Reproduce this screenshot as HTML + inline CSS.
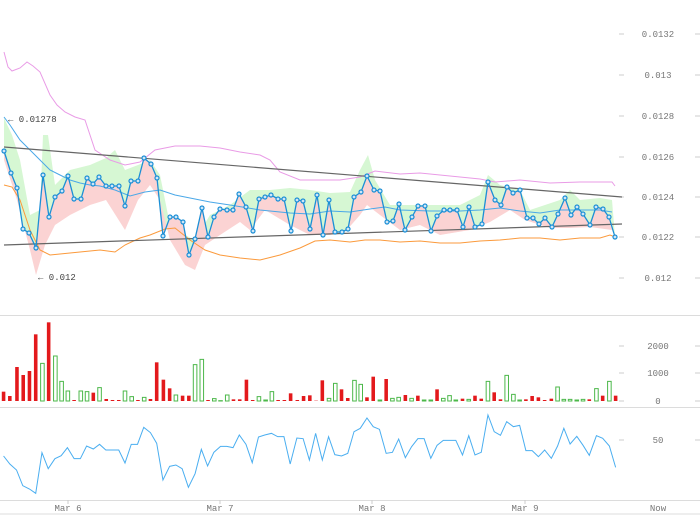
<!DOCTYPE html>
<html><head><meta charset="utf-8"><style>
html,body{margin:0;padding:0;background:#fff;width:700px;height:515px;overflow:hidden}
svg{display:block}
text{font-family:"Liberation Mono",monospace;font-size:9px;fill:#777}
.ns{vector-effect:non-scaling-stroke}
</style></head><body>
<svg width="700" height="515" viewBox="0 0 700 515">
<g stroke="#dcdcdc" stroke-width="1">
<line x1="0" y1="315.5" x2="700" y2="315.5"/>
<line x1="0" y1="407.5" x2="700" y2="407.5"/>
<line x1="0" y1="500.5" x2="700" y2="500.5"/>
<line x1="0" y1="514" x2="700" y2="514"/>
</g>
<g stroke="#ccc">
<line x1="619" y1="34" x2="624" y2="34"/><line x1="695" y1="34" x2="700" y2="34"/>
<line x1="619" y1="75" x2="624" y2="75"/><line x1="695" y1="75" x2="700" y2="75"/>
<line x1="619" y1="116" x2="624" y2="116"/><line x1="695" y1="116" x2="700" y2="116"/>
<line x1="619" y1="157" x2="624" y2="157"/><line x1="695" y1="157" x2="700" y2="157"/>
<line x1="619" y1="197" x2="624" y2="197"/><line x1="695" y1="197" x2="700" y2="197"/>
<line x1="619" y1="237" x2="624" y2="237"/><line x1="695" y1="237" x2="700" y2="237"/>
<line x1="619" y1="278" x2="624" y2="278"/><line x1="695" y1="278" x2="700" y2="278"/>
<line x1="619" y1="346" x2="624" y2="346"/><line x1="695" y1="346" x2="700" y2="346"/>
<line x1="619" y1="373" x2="624" y2="373"/><line x1="695" y1="373" x2="700" y2="373"/>
<line x1="619" y1="401" x2="624" y2="401"/><line x1="695" y1="401" x2="700" y2="401"/>
<line x1="619" y1="440" x2="624" y2="440"/><line x1="695" y1="440" x2="700" y2="440"/>
<line x1="68" y1="500" x2="68" y2="504"/><line x1="220" y1="500" x2="220" y2="504"/>
<line x1="372" y1="500" x2="372" y2="504"/><line x1="525" y1="500" x2="525" y2="504"/>
</g>
<g text-anchor="middle">
<text x="658" y="37">0.0132</text><text x="658" y="78">0.013</text>
<text x="658" y="119">0.0128</text><text x="658" y="160">0.0126</text>
<text x="658" y="200">0.0124</text><text x="658" y="240">0.0122</text>
<text x="658" y="281">0.012</text>
<text x="658" y="349">2000</text><text x="658" y="376">1000</text><text x="658" y="404">0</text>
<text x="658" y="443">50</text>
<text x="68" y="511">Mar 6</text><text x="220" y="511">Mar 7</text>
<text x="372" y="511">Mar 8</text><text x="525" y="511">Mar 9</text>
<text x="658" y="511">Now</text>
</g>

<polygon fill="#d6f7d3" points="4,118 12,135 20,160 30,215 40,210 43,135 48,135 55,185 70,170 90,165 106,158 115,150 125,170 138,165 150,160 160,175 170,225 185,235 195,240 210,215 230,205 250,190 270,190 290,188 310,190 330,193 350,192 360,170 368,155 375,180 390,205 410,205 430,205 460,205 480,195 488,175 500,185 520,190 530,210 560,200 570,190 580,200 600,198 612,200 615,237 609,217 603,209 596,207 590,225 583,214 577,207 571,215 565,198 558,214 552,227 545,218 539,224 533,218 527,218 520,190 513,193 507,187 501,205 495,200 488,182 482,224 475,227 469,207 463,227 457,210 450,210 444,210 437,216 431,231 425,206 418,206 412,217 405,230 399,204 393,221 387,222 380,191 374,190 367,176 361,192 354,197 348,229 342,232 335,232 329,200 323,235 317,195 310,229 303,201 297,200 291,231 284,199 278,199 271,195 265,197 259,199 253,231 246,207 239,194 233,210 227,210 220,209 214,217 208,237 202,208 195,239 189,255 183,222 176,217 170,217 163,236 157,178 151,164 144,158 138,181 131,181 125,206 119,186 112,186 106,186 99,177 93,184 87,178 81,199 74,199 68,176 62,191 55,197 49,217 43,175 36,248 29,233 23,229 17,188 11,173 4,151"/>
<polygon fill="#fbd3d3" points="4,151 11,173 17,188 23,229 29,233 36,248 43,175 49,217 55,197 62,191 68,176 74,199 81,199 87,178 93,184 99,177 106,186 112,186 119,186 125,206 131,181 138,181 144,158 151,164 157,178 163,236 170,217 176,217 183,222 189,255 195,239 202,208 208,237 214,217 220,209 227,210 233,210 239,194 246,207 253,231 259,199 265,197 271,195 278,199 284,199 291,231 297,200 303,201 310,229 317,195 323,235 329,200 335,232 342,232 348,229 354,197 361,192 367,176 374,190 380,191 387,222 393,221 399,204 405,230 412,217 418,206 425,206 431,231 437,216 444,210 450,210 457,210 463,227 469,207 475,227 482,224 488,182 495,200 501,205 507,187 513,193 520,190 527,218 533,218 539,224 545,218 552,227 558,214 565,198 571,215 577,207 583,214 590,225 596,207 603,209 609,217 615,237 612,230 590,227 570,228 550,228 525,220 510,210 490,222 470,230 440,235 420,225 400,230 380,215 367,205 360,215 345,232 330,235 310,235 290,225 265,210 250,230 240,222 220,235 205,245 195,270 185,265 170,240 160,200 150,185 138,200 125,230 106,200 90,205 70,215 55,225 45,245 36,275 30,250 17,200 4,160"/>

<polyline fill="none" stroke="#e99be6" stroke-width="1" points="4,52 8,67 12,71 20,68 27,62 33,66 40,72 50,95 57,105 65,112 75,117 85,120 95,150 110,160 125,165 140,162 155,150 175,146 200,146 220,148 240,152 260,155 270,160 280,172 300,180 320,180 340,180 360,177 375,171 400,174 420,173 450,176 480,179 495,182 520,180 550,183 580,182 600,182 612,182 615,186"/>
<polyline fill="none" stroke="#4aa8e8" stroke-width="1" points="4,117 10,125 20,140 30,150 40,160 50,170 60,175 70,180 80,183 90,185 100,186 115,190 130,196 145,192 160,190 175,195 190,198 210,202 230,205 260,210 290,213 310,214 330,211 350,212 370,209 385,207 400,210 430,211 460,211 480,210 500,208 520,211 540,213 560,210 580,210 600,210 612,212"/>
<polyline fill="none" stroke="#fb9a3c" stroke-width="1" points="4,185 12,187 20,200 30,230 40,250 50,255 60,254 80,252 100,250 115,252 125,245 140,238 150,235 165,229 175,228 190,240 205,250 220,255 240,258 260,260 280,255 300,248 315,241 330,240 350,242 365,240 380,240 400,242 420,241 440,243 460,243 480,241 500,240 520,238 540,238 560,240 580,238 600,238 610,235 615,237"/>
<line x1="4" y1="147" x2="622" y2="197" stroke="#666" stroke-width="1.2"/>
<line x1="4" y1="245" x2="622" y2="224" stroke="#666" stroke-width="1.2"/>

<polyline fill="none" stroke="#1b8fd6" stroke-width="1.3" points="4,151 11,173 17,188 23,229 29,233 36,248 43,175 49,217 55,197 62,191 68,176 74,199 81,199 87,178 93,184 99,177 106,186 112,186 119,186 125,206 131,181 138,181 144,158 151,164 157,178 163,236 170,217 176,217 183,222 189,255 195,239 202,208 208,237 214,217 220,209 227,210 233,210 239,194 246,207 253,231 259,199 265,197 271,195 278,199 284,199 291,231 297,200 303,201 310,229 317,195 323,235 329,200 335,232 342,232 348,229 354,197 361,192 367,176 374,190 380,191 387,222 393,221 399,204 405,230 412,217 418,206 425,206 431,231 437,216 444,210 450,210 457,210 463,227 469,207 475,227 482,224 488,182 495,200 501,205 507,187 513,193 520,190 527,218 533,218 539,224 545,218 552,227 558,214 565,198 571,215 577,207 583,214 590,225 596,207 603,209 609,217 615,237"/>
<g fill="#cfe6f7" stroke="#1b8fd6" stroke-width="1.2">
<circle cx="4" cy="151" r="2"/><circle cx="11" cy="173" r="2"/><circle cx="17" cy="188" r="2"/><circle cx="23" cy="229" r="2"/><circle cx="29" cy="233" r="2"/><circle cx="36" cy="248" r="2"/><circle cx="43" cy="175" r="2"/><circle cx="49" cy="217" r="2"/><circle cx="55" cy="197" r="2"/><circle cx="62" cy="191" r="2"/><circle cx="68" cy="176" r="2"/><circle cx="74" cy="199" r="2"/><circle cx="81" cy="199" r="2"/><circle cx="87" cy="178" r="2"/><circle cx="93" cy="184" r="2"/><circle cx="99" cy="177" r="2"/><circle cx="106" cy="186" r="2"/><circle cx="112" cy="186" r="2"/><circle cx="119" cy="186" r="2"/><circle cx="125" cy="206" r="2"/><circle cx="131" cy="181" r="2"/><circle cx="138" cy="181" r="2"/><circle cx="144" cy="158" r="2"/><circle cx="151" cy="164" r="2"/><circle cx="157" cy="178" r="2"/><circle cx="163" cy="236" r="2"/><circle cx="170" cy="217" r="2"/><circle cx="176" cy="217" r="2"/><circle cx="183" cy="222" r="2"/><circle cx="189" cy="255" r="2"/><circle cx="195" cy="239" r="2"/><circle cx="202" cy="208" r="2"/><circle cx="208" cy="237" r="2"/><circle cx="214" cy="217" r="2"/><circle cx="220" cy="209" r="2"/><circle cx="227" cy="210" r="2"/><circle cx="233" cy="210" r="2"/><circle cx="239" cy="194" r="2"/><circle cx="246" cy="207" r="2"/><circle cx="253" cy="231" r="2"/><circle cx="259" cy="199" r="2"/><circle cx="265" cy="197" r="2"/><circle cx="271" cy="195" r="2"/><circle cx="278" cy="199" r="2"/><circle cx="284" cy="199" r="2"/><circle cx="291" cy="231" r="2"/><circle cx="297" cy="200" r="2"/><circle cx="303" cy="201" r="2"/><circle cx="310" cy="229" r="2"/><circle cx="317" cy="195" r="2"/><circle cx="323" cy="235" r="2"/><circle cx="329" cy="200" r="2"/><circle cx="335" cy="232" r="2"/><circle cx="342" cy="232" r="2"/><circle cx="348" cy="229" r="2"/><circle cx="354" cy="197" r="2"/><circle cx="361" cy="192" r="2"/><circle cx="367" cy="176" r="2"/><circle cx="374" cy="190" r="2"/><circle cx="380" cy="191" r="2"/><circle cx="387" cy="222" r="2"/><circle cx="393" cy="221" r="2"/><circle cx="399" cy="204" r="2"/><circle cx="405" cy="230" r="2"/><circle cx="412" cy="217" r="2"/><circle cx="418" cy="206" r="2"/><circle cx="425" cy="206" r="2"/><circle cx="431" cy="231" r="2"/><circle cx="437" cy="216" r="2"/><circle cx="444" cy="210" r="2"/><circle cx="450" cy="210" r="2"/><circle cx="457" cy="210" r="2"/><circle cx="463" cy="227" r="2"/><circle cx="469" cy="207" r="2"/><circle cx="475" cy="227" r="2"/><circle cx="482" cy="224" r="2"/><circle cx="488" cy="182" r="2"/><circle cx="495" cy="200" r="2"/><circle cx="501" cy="205" r="2"/><circle cx="507" cy="187" r="2"/><circle cx="513" cy="193" r="2"/><circle cx="520" cy="190" r="2"/><circle cx="527" cy="218" r="2"/><circle cx="533" cy="218" r="2"/><circle cx="539" cy="224" r="2"/><circle cx="545" cy="218" r="2"/><circle cx="552" cy="227" r="2"/><circle cx="558" cy="214" r="2"/><circle cx="565" cy="198" r="2"/><circle cx="571" cy="215" r="2"/><circle cx="577" cy="207" r="2"/><circle cx="583" cy="214" r="2"/><circle cx="590" cy="225" r="2"/><circle cx="596" cy="207" r="2"/><circle cx="603" cy="209" r="2"/><circle cx="609" cy="217" r="2"/><circle cx="615" cy="237" r="2"/>
</g>
<text x="8" y="122" style="fill:#444">← 0.01278</text>
<text x="38" y="280" style="fill:#444">← 0.012</text>

<g transform="translate(0,290) scale(0.44643,0.33333)">
<g fill="#e3191c">
<rect x="4" y="305" width="8" height="28"/><rect x="18" y="318" width="8" height="15"/><rect x="34" y="231" width="8" height="102"/><rect x="48" y="255" width="8" height="78"/><rect x="62" y="243" width="8" height="90"/><rect x="76" y="133" width="8" height="200"/><rect x="105" y="97" width="8" height="236"/><rect x="162" y="330" width="8" height="3"/><rect x="205" y="308" width="8" height="25"/><rect x="234" y="327" width="8" height="6"/><rect x="248" y="330" width="8" height="3"/><rect x="262" y="330" width="8" height="3"/><rect x="305" y="330" width="8" height="3"/><rect x="333" y="327" width="8" height="6"/><rect x="347" y="217" width="8" height="116"/><rect x="362" y="269" width="8" height="64"/><rect x="376" y="295" width="8" height="38"/><rect x="405" y="317" width="8" height="16"/><rect x="419" y="317" width="8" height="16"/><rect x="462" y="330" width="8" height="3"/><rect x="519" y="328" width="8" height="5"/><rect x="533" y="328" width="8" height="5"/><rect x="548" y="269" width="8" height="64"/><rect x="562" y="330" width="8" height="3"/><rect x="619" y="330" width="8" height="3"/><rect x="633" y="330" width="8" height="3"/><rect x="647" y="310" width="8" height="23"/><rect x="662" y="330" width="8" height="3"/><rect x="676" y="318" width="8" height="15"/><rect x="690" y="316" width="8" height="17"/><rect x="704" y="332" width="8" height="1"/><rect x="718" y="271" width="8" height="62"/><rect x="761" y="298" width="8" height="35"/><rect x="775" y="324" width="8" height="9"/><rect x="818" y="322" width="8" height="11"/><rect x="832" y="260" width="8" height="73"/><rect x="861" y="267" width="8" height="66"/><rect x="904" y="315" width="8" height="18"/><rect x="932" y="317" width="8" height="16"/><rect x="975" y="298" width="8" height="35"/><rect x="1032" y="326" width="8" height="7"/><rect x="1060" y="317" width="8" height="16"/><rect x="1074" y="326" width="8" height="7"/><rect x="1103" y="307" width="8" height="26"/><rect x="1117" y="328" width="8" height="5"/><rect x="1174" y="328" width="8" height="5"/><rect x="1188" y="318" width="8" height="15"/><rect x="1202" y="322" width="8" height="11"/><rect x="1216" y="330" width="8" height="3"/><rect x="1231" y="326" width="8" height="7"/><rect x="1316" y="328" width="8" height="5"/><rect x="1346" y="317" width="8" height="16"/><rect x="1375" y="317" width="8" height="16"/>
</g>
<g fill="#fff" stroke="#4cb84a" stroke-width="1">
<rect class="ns" x="91" y="220" width="8" height="113"/><rect class="ns" x="120" y="198" width="8" height="135"/><rect class="ns" x="134" y="274" width="8" height="59"/><rect class="ns" x="148" y="303" width="8" height="30"/><rect class="ns" x="177" y="303" width="8" height="30"/><rect class="ns" x="191" y="305" width="8" height="28"/><rect class="ns" x="219" y="293" width="8" height="40"/><rect class="ns" x="276" y="303" width="8" height="30"/><rect class="ns" x="291" y="320" width="8" height="13"/><rect class="ns" x="319" y="322" width="8" height="11"/><rect class="ns" x="390" y="315" width="8" height="18"/><rect class="ns" x="433" y="224" width="8" height="109"/><rect class="ns" x="448" y="208" width="8" height="125"/><rect class="ns" x="476" y="326" width="8" height="7"/><rect class="ns" x="490" y="332" width="8" height="1"/><rect class="ns" x="505" y="315" width="8" height="18"/><rect class="ns" x="576" y="320" width="8" height="13"/><rect class="ns" x="591" y="330" width="8" height="3"/><rect class="ns" x="605" y="305" width="8" height="28"/><rect class="ns" x="733" y="325" width="8" height="8"/><rect class="ns" x="747" y="280" width="8" height="53"/><rect class="ns" x="790" y="271" width="8" height="62"/><rect class="ns" x="804" y="283" width="8" height="50"/><rect class="ns" x="847" y="330" width="8" height="3"/><rect class="ns" x="875" y="325" width="8" height="8"/><rect class="ns" x="889" y="322" width="8" height="11"/><rect class="ns" x="918" y="325" width="8" height="8"/><rect class="ns" x="946" y="330" width="8" height="3"/><rect class="ns" x="961" y="330" width="8" height="3"/><rect class="ns" x="989" y="325" width="8" height="8"/><rect class="ns" x="1003" y="317" width="8" height="16"/><rect class="ns" x="1017" y="330" width="8" height="3"/><rect class="ns" x="1046" y="328" width="8" height="5"/><rect class="ns" x="1089" y="274" width="8" height="59"/><rect class="ns" x="1131" y="256" width="8" height="77"/><rect class="ns" x="1146" y="313" width="8" height="20"/><rect class="ns" x="1160" y="330" width="8" height="3"/><rect class="ns" x="1245" y="291" width="8" height="42"/><rect class="ns" x="1259" y="328" width="8" height="5"/><rect class="ns" x="1273" y="328" width="8" height="5"/><rect class="ns" x="1288" y="330" width="8" height="3"/><rect class="ns" x="1302" y="328" width="8" height="5"/><rect class="ns" x="1332" y="296" width="8" height="37"/><rect class="ns" x="1361" y="274" width="8" height="59"/>
</g>
<polyline class="ns" fill="none" stroke="#4aaef0" stroke-width="1" points="8,498 22,522 37,540 51,587 66,597 80,610 94,488 108,536 123,506 137,497 151,473 166,506 180,506 194,468 209,477 223,463 237,480 251,480 266,480 280,519 294,463 308,463 322,412 337,428 351,460 365,570 380,529 394,525 408,536 422,592 437,551 451,478 465,528 479,487 494,469 508,469 522,473 536,435 551,463 565,518 579,441 593,435 608,430 622,440 636,440 650,522 665,444 679,446 693,510 707,430 722,510 736,440 750,494 765,498 779,490 793,425 807,415 822,384 836,410 850,418 865,490 879,487 893,447 908,503 922,470 936,446 950,446 965,505 979,466 993,451 1007,451 1021,451 1036,495 1050,437 1064,495 1078,487 1093,375 1107,425 1121,436 1135,395 1150,410 1164,406 1178,482 1192,482 1206,500 1220,480 1235,505 1249,468 1263,415 1277,462 1292,439 1306,466 1320,496 1336,437 1350,445 1365,468 1379,532"/>
</g>
</svg>
</body></html>
